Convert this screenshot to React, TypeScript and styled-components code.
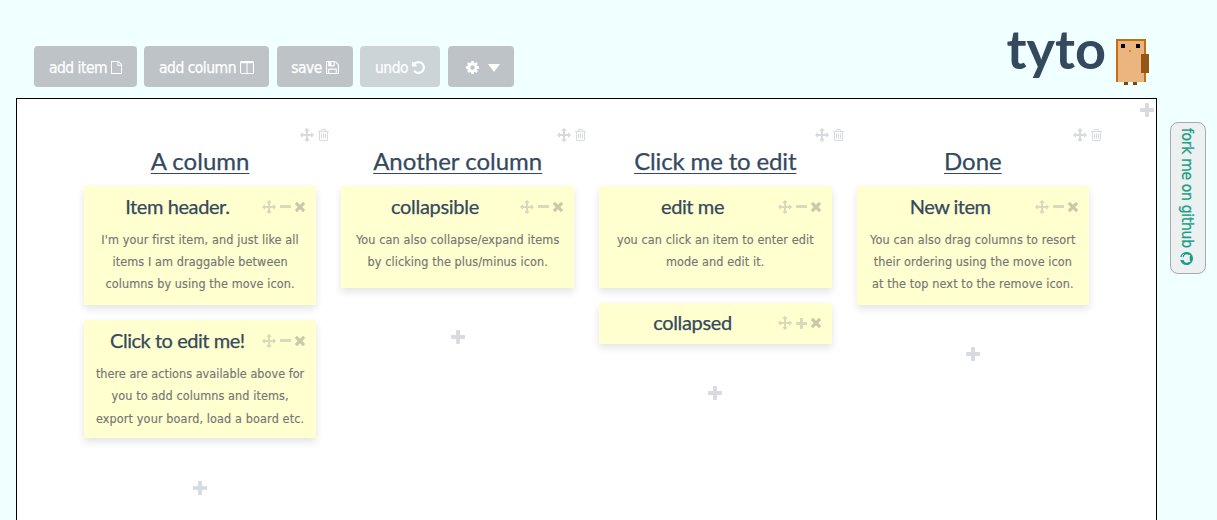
import React from "react";
import styled, { createGlobalStyle } from "styled-components";

const GlobalStyle = createGlobalStyle`
  * { box-sizing: border-box; }
  body {
    margin: 0;
    background: #f0ffff;
    font-family: "DejaVu Sans Condensed", "DejaVu Sans", sans-serif;
    font-stretch: condensed;
    overflow: hidden;
  }
`;

/* ---------- icons ---------- */

const glyphs = {
  move: { box: "0 0 1792 1792", d: "M1792 896q0 26-19 45l-256 256q-19 19-45 19t-45-19-19-45v-128h-384v384h128q26 0 45 19t19 45-19 45l-256 256q-19 19-45 19t-45-19l-256-256q-19-19-19-45t19-45 45-19h128v-384h-384v128q0 26-19 45t-45 19-45-19l-256-256q-19-19-19-45t19-45l256-256q19-19 45-19t45 19 19 45v128h384v-384h-128q-26 0-45-19t-19-45 19-45l256-256q19-19 45-19t45 19l256 256q19 19 19 45t-19 45-45 19h-128v384h384v-128q0-26 19-45t45-19 45 19l256 256q19 19 19 45z" },
  plus: { box: "192 128 1408 1408", d: "M1600 736v192q0 40-28 68t-68 28h-416v416q0 40-28 68t-68 28h-192q-40 0-68-28t-28-68v-416h-416q-40 0-68-28t-28-68v-192q0-40 28-68t68-28h416v-416q0-40 28-68t68-28h192q40 0 68 28t28 68v416h416q40 0 68 28t28 68z" },
  minus: { box: "192 640 1408 384", d: "M1600 736v192q0 40-28 68t-68 28h-1216q-40 0-68-28t-28-68v-192q0-40 28-68t68-28h1216q40 0 68 28t28 68z" },
  times: { box: "302 366 1188 1188", d: "M1490 1322q0 40-28 68l-136 136q-28 28-68 28t-68-28l-294-294-294 294q-28 28-68 28t-68-28l-136-136q-28-28-28-68t28-68l294-294-294-294q-28-28-28-68t28-68l136-136q28-28 68-28t68 28l294 294 294-294q28-28 68-28t68 28l136 136q28 28 28 68t-28 68l-294 294 294 294q28 28 28 68z" },
  trash: { box: "192 128 1408 1536", d: "M704 736v576q0 14-9 23t-23 9h-64q-14 0-23-9t-9-23v-576q0-14 9-23t23-9h64q14 0 23 9t9 23zm256 0v576q0 14-9 23t-23 9h-64q-14 0-23-9t-9-23v-576q0-14 9-23t23-9h64q14 0 23 9t9 23zm256 0v576q0 14-9 23t-23 9h-64q-14 0-23-9t-9-23v-576q0-14 9-23t23-9h64q14 0 23 9t9 23zm128 724v-948h-896v948q0 22 7 40.500t14.500 27 10.500 8.500h832q3 0 10.500-8.500t14.500-27 7-40.500zm-672-1076h448l-48-117q-7-9-17-11h-317q-10 2-17 11zm928 32v64q0 14-9 23t-23 9h-96v948q0 83-47 143.500t-113 60.500h-832q-66 0-113-58.500t-47-141.500v-952h-96q-14 0-23-9t-9-23v-64q0-14 9-23t23-9h309l70-167q15-37 54-63t79-26h320q40 0 79 26t54 63l70 167h309q14 0 23 9t9 23z" },
  file: { box: "128 0 1536 1792", d: "M1596 380q28 28 48 76t20 88v1152q0 40-28 68t-68 28h-1344q-40 0-68-28t-28-68v-1600q0-40 28-68t68-28h896q40 0 88 20t76 48zm-444-244v376h376q-10-29-22-41l-313-313q-12-12-41-22zm384 1528v-1024h-416q-40 0-68-28t-28-68v-416h-768v1536h1280z" },
  save: { box: "128 128 1536 1536", d: "M512 1536h768v-384h-768v384zm896 0h128v-896q0-14-10-38.500t-20-34.500l-281-281q-10-10-34-20t-39-10v416q0 40-28 68t-68 28h-576q-40 0-68-28t-28-68v-416h-128v1280h128v-416q0-40 28-68t68-28h832q40 0 68 28t28 68v416zm-384-928v-320q0-13-9.500-22.500t-22.500-9.500h-192q-13 0-22.500 9.500t-9.500 22.500v320q0 13 9.500 22.500t22.500 9.500h192q13 0 22.500-9.500t9.500-22.500zm640 32v928q0 40-28 68t-68 28h-1344q-40 0-68-28t-28-68v-1344q0-40 28-68t68-28h928q40 0 88 20t76 48l280 280q28 28 48 76t20 88z" },
  columns: { box: "64 128 1664 1536", d: "M224 1536h608v-1152h-640v1120q0 13 9.500 22.500t22.500 9.500zm1376-32v-1120h-640v1152h608q13 0 22.500-9.500t9.500-22.500zm128-1216v1216q0 66-47 113t-113 47h-1344q-66 0-113-47t-47-113v-1216q0-66 47-113t113-47h1344q66 0 113 47t47 113z" },
  undo: { box: "128 128 1536 1536", d: "M1664 896q0 156-61 298t-164 245-245 164-298 61q-172 0-327-72.500t-264-204.500q-7-10-6.500-22.500t8.500-20.500l137-138q10-9 25-9 16 2 23 12 73 95 179 147t225 52q104 0 198.500-40.500t163.500-109.500 109.500-163.500 40.500-198.500-40.500-198.500-109.500-163.500-163.500-109.500-198.500-40.500q-98 0-188 35.500t-160 101.500l137 138q31 30 14 69-17 40-59 40h-448q-26 0-45-19t-19-45v-448q0-42 40-59 39-17 69 14l130 129q107-101 244.500-156.500t284.500-55.500q156 0 298 61t245 164 164 245 61 298z" },
  cog: { box: "128 128 1536 1536", d: "M1152 896q0-106-75-181t-181-75-181 75-75 181 75 181 181 75 181-75 75-181zm512-109v222q0 12-8 23t-20 13l-185 28q-19 54-39 91 35 50 107 138 10 12 10 25t-9 23q-27 37-99 108t-94 71q-12 0-26-9l-138-108q-44 23-91 38-16 136-29 186-7 28-36 28h-222q-14 0-24.500-8.500t-11.500-21.500l-28-184q-49-16-90-37l-141 107q-10 9-25 9-14 0-25-11-126-114-165-168-7-10-7-23 0-12 8-23 15-21 51-66.500t54-70.500q-27-50-41-99l-183-27q-13-2-21-12.500t-8-23.500v-222q0-12 8-23t19-13l186-28q14-46 39-92-40-57-107-138-10-12-10-24 0-10 9-23 26-36 98.500-107.500t94.500-71.500q13 0 26 10l138 107q44-23 91-38 16-136 29-186 7-28 36-28h222q14 0 24.500 8.500t11.500 21.500l28 184q49 16 90 37l142-107q9-9 24-9 13 0 25 10 129 119 165 170 7 8 7 22 0 12-8 23-15 21-51 66.500t-54 70.500q26 50 41 98l183 28q13 2 21 12.500t8 23.500z" },
  github: { box: "128 128 1536 1536", d: "M896 128q209 0 385.500 103t279.500 279.500 103 385.500q0 251-146.500 451.500t-378.500 277.500q-27 5-40-7t-13-30q0-3 .5-76.500t.5-134.500q0-97-52-142 57-6 102.500-18t94-39 81-66.500 53-105 20.500-150.500q0-119-79-206 37-91-8-204-28-9-81 11t-92 44l-38 24q-93-26-192-26t-192 26q-16-11-42.500-27t-83.500-38.500-85-13.500q-45 113-8 204-79 87-79 206 0 85 20.500 150t52.500 105 80.500 67 94 39 102.500 18q-39 36-49 103-21 10-45 15t-57 5-65.500-21.500-55.500-62.500q-19-32-48.500-52t-49.500-24l-20-3q-21 0-29 4.500t-5 11.500 9 14 13 12l7 5q22 10 43.500 38t31.500 51l10 23q13 38 44 61.500t67 30 69.500 7 55.500-3.500l23-4q0 38 .5 88.500t.5 54.500q0 18-13 30t-40 7q-232-77-378.500-277.500t-146.500-451.500q0-209 103-385.500t279.500-279.500 385.500-103z" },
  caret: { box: "0 0 12 8", d: "M0 0h12L6 8z" },
};

const Glyph = styled.svg`
  display: block;
  flex: none;
  fill: currentColor;
`;

function Icon({ name, w, h = w }: { name: keyof typeof glyphs; w: number; h?: number }) {
  return (
    <Glyph width={w} height={h} viewBox={glyphs[name].box} preserveAspectRatio="none">
      <path d={glyphs[name].d} />
    </Glyph>
  );
}

/* ---------- header ---------- */

const Header = styled.header`
  display: flex;
  justify-content: space-between;
  height: 98px;
  padding: 0 67px 0 34px;
`;

const Toolbar = styled.nav`
  display: flex;
  padding-top: 46px;
`;

const Button = styled.button<{ $width: number; $gap?: number; $after?: number; $inset?: number; $disabled?: boolean }>`
  display: flex;
  align-items: center;
  justify-content: center;
  gap: ${(p) => p.$gap ?? 4}px;
  width: ${(p) => p.$width}px;
  height: 41px;
  margin-right: ${(p) => p.$after ?? 7}px;
  padding: 2px 0 0 ${(p) => p.$inset ?? 0}px;
  border: 0;
  border-radius: 4px;
  background: #bdc3c7;
  color: #fff;
  opacity: ${(p) => (p.$disabled ? 0.7 : 1)};
  font: inherit;
  font-size: 15.5px;
  letter-spacing: -0.5px;
  -webkit-text-stroke: 0.25px currentColor;
  white-space: nowrap;
`;

const Brand = styled.div`
  display: flex;
  align-items: flex-start;
  gap: 10px;
`;

const Wordmark = styled.h1`
  margin: 0;
  padding-top: 18px;
  color: #34495e;
  font: 700 54px/62px Lato, sans-serif;
`;

const Owl = styled.svg`
  display: block;
  margin-top: 39px;
`;

/* ---------- board ---------- */

const Main = styled.main`
  display: flex;
  align-items: flex-start;
  padding-left: 16px;
`;

const Board = styled.section`
  position: relative;
  display: flex;
  width: 1141px;
  height: 440px;
  padding: 29px 0 0 54.3px;
  border: 1px solid #000;
  background: #fff;
`;

const AddColumn = styled.div`
  position: absolute;
  top: 4px;
  right: 2.5px;
  color: #d7dbe0;
`;

const Column = styled.div`
  display: flex;
  flex-direction: column;
  align-items: center;
  width: 257.6px;
  color: #d7dbe0;
`;

const ColumnTools = styled.div`
  display: flex;
  align-items: center;
  align-self: flex-end;
  gap: 4px;
  height: 14px;
`;

const ColumnTitle = styled.h2<{ $track?: number }>`
  margin: 3px 0 9px;
  height: 32px;
  color: #34495e;
  font: 400 24px/32px Lato, sans-serif;
  -webkit-text-stroke: 0.25px currentColor;
  letter-spacing: ${(p) => p.$track ?? 0}px;
  text-decoration: underline;
  text-decoration-thickness: 1px;
  text-underline-offset: 3px;
`;

const Card = styled.article<{ $height: number }>`
  width: 232.6px;
  height: ${(p) => p.$height}px;
  margin-bottom: 15.4px;
  background: #ffffcf;
  box-shadow: 0 4px 8px rgba(0, 0, 0, 0.11);
`;

const CardHead = styled.div`
  display: flex;
  align-items: center;
  height: 41px;
  padding: 0 11px 0 8.5px;
`;

const CardTitle = styled.h3<{ $track?: number }>`
  flex: 1;
  margin: 0;
  padding-bottom: 2px;
  color: #34495e;
  font: 400 20px/28px Lato, sans-serif;
  -webkit-text-stroke: 0.25px currentColor;
  letter-spacing: ${(p) => p.$track ?? 0}px;
  text-align: center;
  white-space: nowrap;
`;

const CardTools = styled.div`
  display: flex;
  align-items: center;
  gap: 4px;
  color: #d7dbb9;
`;

const Close = styled.span`
  color: #c9cba8;
`;

const Copy = styled.p`
  margin: 0;
  padding-top: 2px;
  color: #757575;
  font-size: 12.5px;
  line-height: 22.2px;
  text-align: center;
  -webkit-text-stroke: 0.15px currentColor;
`;

const Line = styled.span<{ $track: number }>`
  display: block;
  letter-spacing: ${(p) => p.$track}px;
  white-space: nowrap;
`;

const AddItem = styled.div`
  margin-top: 27px;
`;

/* ---------- side tab ---------- */

const ForkTab = styled.a`
  display: flex;
  align-items: center;
  justify-content: center;
  gap: 4px;
  width: 36px;
  height: 152px;
  margin: 24px 0 0 13px;
  padding: 0 3px 3px 0;
  border: 1px solid #aaa;
  border-radius: 8px;
  background: #ecf0f1;
  color: #16a085;
  font-size: 15.5px;
  letter-spacing: -0.3px;
  -webkit-text-stroke: 0.25px currentColor;
  white-space: nowrap;
  writing-mode: vertical-rl;
`;

const TurnedIcon = styled.span`
  display: flex;
  transform: rotate(90deg);
`;

type ItemData = { title: string; height: number; track?: number; lines: [string, number][]; collapsed?: boolean };
type ColumnData = { title: string; track?: number; items: ItemData[] };

const columns: ColumnData[] = [
  {
    title: "A column",
    items: [
      {
        title: "Item header.",
        height: 118.8,
        track: -0.4,
        lines: [
          ["I'm your first item, and just like all", 0.13],
          ["items I am draggable between", 0.1],
          ["columns by using the move icon.", 0.1],
        ],
      },
      {
        title: "Click to edit me!",
        height: 118,
        track: -0.46,
        lines: [
          ["there are actions available above for", 0.04],
          ["you to add columns and items,", 0.1],
          ["export your board, load a board etc.", 0.13],
        ],
      },
    ],
  },
  {
    title: "Another column",
    items: [
      {
        title: "collapsible",
        height: 101.5,
        track: -0.3,
        lines: [
          ["You can also collapse/expand items", 0.12],
          ["by clicking the plus/minus icon.", 0.1],
        ],
      },
    ],
  },
  {
    title: "Click me to edit",
    track: -0.15,
    items: [
      {
        title: "edit me",
        height: 101.5,
        track: -0.4,
        lines: [
          ["you can click an item to enter edit", 0.1],
          ["mode and edit it.", 0.12],
        ],
      },
      { title: "collapsed", height: 41, track: -0.35, lines: [], collapsed: true },
    ],
  },
  {
    title: "Done",
    items: [
      {
        title: "New item",
        height: 118.8,
        track: -0.5,
        lines: [
          ["You can also drag columns to resort", 0.13],
          ["their ordering using the move icon", 0.1],
          ["at the top next to the remove icon.", 0.12],
        ],
      },
    ],
  },
];

function Item({ title, height, track, lines, collapsed }: ItemData) {
  return (
    <Card $height={height}>
      <CardHead>
        <CardTitle $track={track}>{title}</CardTitle>
        <CardTools>
          <Icon name="move" w={14} />
          {collapsed ? <Icon name="plus" w={11} /> : <Icon name="minus" w={11} h={3} />}
          <Close>
            <Icon name="times" w={10} />
          </Close>
        </CardTools>
      </CardHead>
      <Copy>
        {lines.map(([text, t]) => (
          <Line key={text} $track={t}>{text}</Line>
        ))}
      </Copy>
    </Card>
  );
}

export default function App() {
  return (
    <>
      <GlobalStyle />
      <Header>
        <Toolbar>
          <Button $width={103}>add item <Icon name="file" w={11} h={13} /></Button>
          <Button $width={125} $after={8}>add column <Icon name="columns" w={14} h={13} /></Button>
          <Button $width={76}>save <Icon name="save" w={13} /></Button>
          <Button $width={80} $after={8} $disabled>undo <Icon name="undo" w={13} /></Button>
          <Button $width={66} $gap={9} $inset={3}><Icon name="cog" w={13} /><Icon name="caret" w={12} h={8} /></Button>
        </Toolbar>
        <Brand>
          <Wordmark>tyto</Wordmark>
          <Owl width="34" height="46" viewBox="0 0 34 46" shapeRendering="crispEdges">
            <rect width="30" height="43" fill="#c46f0c" />
            <rect x="2" y="2" width="26" height="41" fill="#ebb57f" />
            <rect x="5" y="5" width="4" height="4" fill="#000" />
            <rect x="20" y="5" width="4" height="4" fill="#000" />
            <rect x="13" y="11" width="2" height="2" fill="#f08000" />
            <rect x="25" y="15" width="8" height="19" fill="#955713" />
            <rect x="8" y="43" width="4" height="3" fill="#7a4710" />
            <rect x="17" y="43" width="4" height="3" fill="#7a4710" />
          </Owl>
        </Brand>
      </Header>
      <Main>
        <Board>
          {columns.map((c) => (
            <Column key={c.title}>
              <ColumnTools>
                <Icon name="move" w={14} />
                <Icon name="trash" w={11} h={12} />
              </ColumnTools>
              <ColumnTitle $track={c.track}>{c.title}</ColumnTitle>
              {c.items.map((item) => (
                <Item key={item.title} {...item} />
              ))}
              <AddItem><Icon name="plus" w={14} /></AddItem>
            </Column>
          ))}
          <AddColumn><Icon name="plus" w={14} /></AddColumn>
        </Board>
        <ForkTab>
          fork me on github
          <TurnedIcon><Icon name="github" w={13} /></TurnedIcon>
        </ForkTab>
      </Main>
    </>
  );
}
